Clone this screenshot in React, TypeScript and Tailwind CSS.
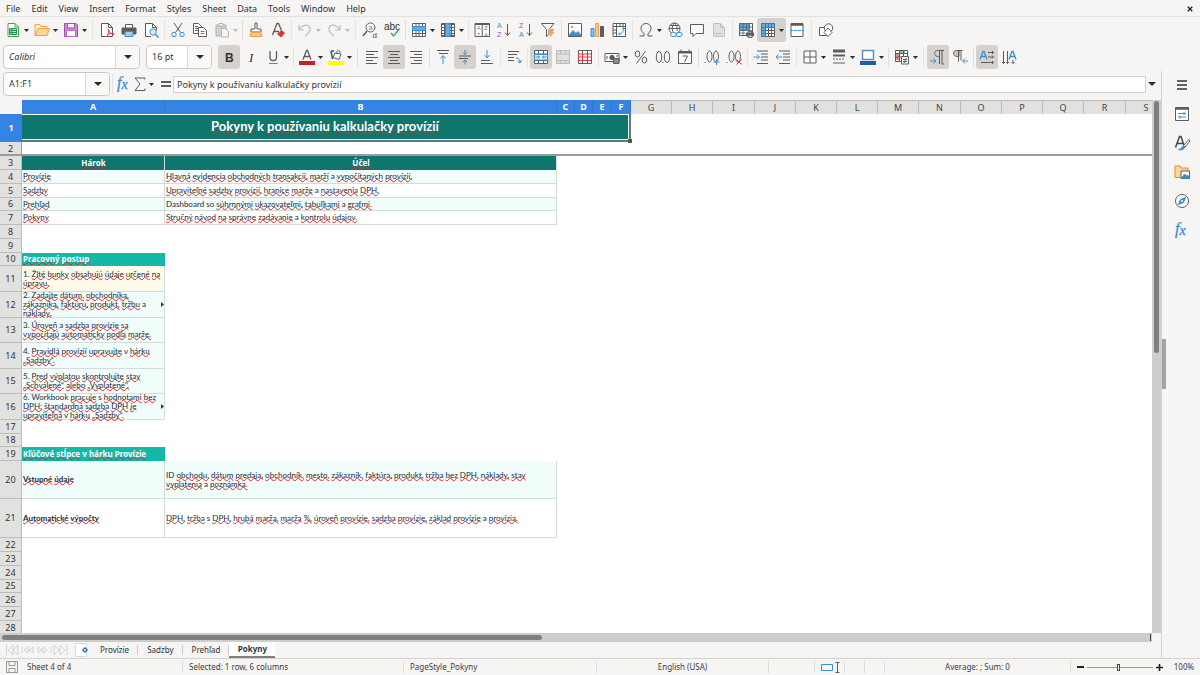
import type { ReactNode } from "react";

const blue = "#3a8fd0";
const red = "#e0343c";
const gray = "#5c5c5a";
const orange = "#eda14c";

const fn = <text x="1" y="12" fontSize="16" fontStyle="italic" fontFamily="Liberation Serif, serif" fill={blue} stroke={blue} strokeWidth=".3">f<tspan fontSize="14" dy="1">x</tspan></text>;
const sheetGrid = <path d="M1.5 2.5h13v11h-13zM1.5 5.5h13M1.5 8.5h13M1.5 11.5h13M4.5 2.5v11M8 2.5v11M11.5 2.5v11" />;

const icons: Record<string, ReactNode> = {
  new: (
    <g>
      <path d="M3 1.5h7l3.500 3.500v9.500h-10.500z" fill="#fff" stroke="#3fa35f" />
      <path d="M10 1.500v3.500h3.500" stroke="#3fa35f" />
      <path d="M4.500 6.500h7v6h-7zM4.500 8.500h7M4.500 10.500h7M7 6.500v6" fill="#b5e0c2" stroke="#2e9150" />
    </g>
  ),
  open: (
    <g stroke={orange}>
      <path d="M1 13.500v-11h5l1 2h6v3" fill="#fdf1df" />
      <path d="M1 13.500l3-7h11.500l-2.500 7z" fill="#fbd49a" />
    </g>
  ),
  save: (
    <g stroke="#a34fb0">
      <path d="M1.500 1.500h11.500l1.500 1.500v11.500h-13z" fill="#cd8bd8" />
      <path d="M4.500 1.500h7v4.500h-7z" fill="#f6f5f4" />
      <path d="M3.500 8.500h9v6h-9z" fill="#fff" stroke="#b76cc4" />
    </g>
  ),
  pdf: (
    <g>
      <path d="M2.500 1.500h7l4 4v9h-11zM9.500 1.500v4h4" fill="#fff" />
      <path d="M9 7c1 4 4 5 6.500 5.500M10 8c0 3-1 5-3 7M8 13c2-2 5-2 7-1" stroke={red} />
    </g>
  ),
  print: (
    <g>
      <path d="M4.500 6v-3.500h7v3.500" fill="#fff" />
      <path d="M1 6h14v6h-14z" fill="#5c5c5a" />
      <path d="M4 9.500h8v5h-8z" fill="#9fcdf0" stroke={blue} />
    </g>
  ),
  preview: (
    <g>
      <path d="M8 14.500h-5.500v-13h7l4 4v3M9.500 1.500v4h4" fill="#fff" />
      <circle cx="10" cy="10" r="3.200" fill="#d7ecfa" stroke={blue} />
      <path d="M12.500 12.500l3 3" stroke={blue} strokeWidth="1.500" />
    </g>
  ),
  cut: (
    <g>
      <path d="M4 1l6.500 9.500M12 1l-6.500 9.500" />
      <circle cx="4" cy="12.500" r="2.200" stroke={blue} />
      <circle cx="12" cy="12.500" r="2.200" stroke={blue} />
    </g>
  ),
  copy: (
    <g fill="#fff">
      <path d="M1.500 1.500h5l3 3v7h-8zM3 4.500h3M3 6.500h4M3 8.500h4" />
      <path d="M6.500 5.500h5l3 3v6h-8z" />
      <path d="M8.500 9.500h4M8.500 11.500h4" stroke={blue} />
    </g>
  ),
  paste: (
    <g stroke="#b5b3b0">
      <path d="M2 3h10v11h-10z" fill="#d2d0cd" />
      <path d="M5 1.500h4v3h-4z" fill="#eee" />
      <path d="M7.500 6.500h4l3 3v5.500h-7z" fill="#f6f5f4" />
    </g>
  ),
  clone: (
    <g>
      <path d="M7 1h2v6h4v3h-10v-3h4z" fill="#fff" />
      <path d="M3 10.500h10l1 4h-12z" fill="#fbc88a" stroke={orange} />
    </g>
  ),
  clear: (
    <g>
      <path d="M2.500 13l4.500-11.500h1.500l3 7M4 9.500h5" strokeWidth="1.300" />
      <path d="M7.500 12l4-3.500 3 2.500-3.500 4z" fill={red} stroke={red} />
    </g>
  ),
  undo: <path d="M2 3v5h5M2.500 7.500c3-5 9-6 10.500-1.500 1 3-1.500 5-5 8" stroke="#c2c0bd" strokeWidth="1.200" />,
  redo: <path d="M14 3v5h-5M13.500 7.500c-3-5-9-6-10.500-1.500-1 3 1.500 5 5 8" stroke="#c2c0bd" strokeWidth="1.200" />,
  find: (
    <g>
      <circle cx="8.500" cy="5.500" r="4.500" fill="#fff" />
      <path d="M5 9l-4 5" strokeWidth="1.500" />
      <text x="6.500" y="7.500" fontSize="7" fill={blue} stroke="none">a</text>
      <text x="10.500" y="15.500" fontSize="8" fill="#444" stroke="none">d</text>
    </g>
  ),
  spell: (
    <g>
      <text x="0" y="8" fontSize="10" fill="#333" stroke="none">abc</text>
      <path d="M7 11l2.500 3 5-6" stroke="#3fae5f" strokeWidth="1.400" />
    </g>
  ),
  row: (
    <g>
      <path d="M1.500 1.500h13v13h-13zM1.500 11.500h13M5 1.500v13M8 1.500v13M11.500 1.500v13" fill="#fff" />
      <path d="M1.500 4.500h13v4h-13z" fill="#5faee5" stroke={blue} />
    </g>
  ),
  column: (
    <g>
      <path d="M1.500 1.500h13v13h-13z" fill="#fff" />
      {sheetGrid}
      <path d="M5.500 1.500h4.500v13h-4.500z" fill="#5faee5" stroke={blue} />
    </g>
  ),
  sort: (
    <g>
      <path d="M1 1.500h14.500v13h-14.500z" fill="#fff" />
      <path d="M1 2h14.500" strokeWidth="2" />
      <path d="M8.200 2v12.500" />
      <g fontSize="6" stroke="none">
        <text x="2.500" y="8" fill={blue}>A</text>
        <text x="2.500" y="15" fill="#a34fb0">Z</text>
        <text x="10" y="8" fill="#a34fb0">Z</text>
        <text x="10" y="15" fill={blue}>A</text>
      </g>
    </g>
  ),
  asc: (
    <g>
      <text x="1" y="6" fontSize="7" fill={blue} stroke="none">A</text>
      <text x="1" y="15" fontSize="7" fill="#a34fb0" stroke="none">Z</text>
      <path d="M11.500 2v11M9 10.500l2.500 3 2.500-3" />
    </g>
  ),
  desc: (
    <g>
      <text x="1" y="6" fontSize="7" fill="#a34fb0" stroke="none">Z</text>
      <text x="1" y="15" fontSize="7" fill={blue} stroke="none">A</text>
      <path d="M11.500 2v11M9 10.500l2.500 3 2.500-3" />
    </g>
  ),
  filter: (
    <g>
      <path d="M1.500 1.500h12.500l-5 6v5l-2.500 2v-7z" fill="#fff" />
      <path d="M11 7l-2 4h2l-1 4 4-5h-2l2-3z" fill={orange} stroke={orange} strokeWidth=".6" />
    </g>
  ),
  image: (
    <g>
      <path d="M1.500 1.500h13v13h-13z" fill="#fff" />
      <path d="M2 13.500l4-5 3 3 2-2 3.500 4z" fill={blue} stroke={blue} />
      <circle cx="5" cy="5" r="1.300" fill={orange} stroke="none" />
    </g>
  ),
  chart: (
    <g>
      <path d="M2 6.500h3v8h-3z" fill="#8ac3ec" stroke={blue} />
      <path d="M6.500 1.500h3v13h-3z" fill="#fbc88a" stroke={orange} />
      <path d="M11.500 4.500h3v10h-3z" fill="#5c5c5a" />
    </g>
  ),
  pivot: (
    <g>
      <path d="M2 1.500h12.500v13h-12.500zM2 4.500h12.500M5.500 1.500v13M9 1.500v3M12 1.500v3M2 8h3.500M2 11h3.500" fill="#fff" />
      <path d="M11 7l1.500-1.500 1.500 1.500M12.500 6c0 4-1.500 6-5 6M9 10.500l-1.500 1.500 1.500 1.500" stroke={blue} />
    </g>
  ),
  omega: <path d="M1.500 14h4.500v-2.500c-5-3-3.500-10 2-10s7 7 2 10v2.500h4.500" />,
  link: (
    <g>
      <circle cx="7.500" cy="6.500" r="5.500" fill="#fff" />
      <path d="M2 6.500h11M3 3.500h9M7.500 1c-3 3-3 8 0 11M7.500 1c3 3 3 6 2.500 8" />
      <rect x="3.500" y="10.500" width="6" height="4" rx="2" fill="#fff" stroke={blue} />
      <rect x="9" y="10.500" width="6" height="4" rx="2" stroke={blue} />
    </g>
  ),
  comment: <path d="M1.500 2.500h13v9h-7.500l-3 3v-3h-2.500z" fill="#fff" />,
  headerFooter: (
    <g stroke="#c2c0bd">
      <path d="M2.500 1.500h7l4 4v9h-11z" fill="#e2e0de" />
      <path d="M9.500 1.500v4h4M4 11.500h7" />
    </g>
  ),
  printArea: (
    <g>
      <path d="M1.500 1.500h13v12h-13z" fill="#fff" />
      <path d="M2 2h9v6h-9z" fill="#5faee5" stroke={blue} />
      <path d="M1.500 5h13M1.500 8.500h13M1.500 11h6M5 1.500v12M8.500 1.500v7M11.500 1.500v7M14.500 1.500v7" strokeWidth=".8" />
      <path d="M8.500 11h7v3h-7z" fill="#5c5c5a" />
      <path d="M10 9.500h4v1.500h-4zM10 13h4v2.500h-4z" fill="#9fcdf0" strokeWidth=".8" />
    </g>
  ),
  freeze: (
    <g>
      <path d="M1.500 1.500h13v13h-13z" fill="#fff" />
      <path d="M1.500 5.500h13M1.500 8.500h13M1.500 11.500h13M5.500 1.500v13M8.500 1.500v13M11.500 1.500v13" />
      <path d="M1.500 1.500h13v4h-9v9h-4z" fill="#5faee5" stroke="#2a7fc4" />
      <path d="M5.500 1.500v4h-4M8.500 1.500v4M11.500 1.500v4M1.500 8.500h4M1.500 11.500h4" stroke="#2a7fc4" />
    </g>
  ),
  split: (
    <g>
      <path d="M2 1.500h12v13h-12z" fill="#fff" />
      <path d="M2 2.500h12" strokeWidth="2.500" />
      <path d="M1 8.500h14" stroke={blue} strokeDasharray="3 1" />
    </g>
  ),
  shapes: (
    <g>
      <path d="M1.500 5.500h7v8h-7z" fill="#fff" />
      <circle cx="10.500" cy="6" r="4.200" fill="#fff" />
      <path d="M10 6l4 4.500-4 4-4-4z" fill="#fff" />
    </g>
  ),
  bold: <text x="4" y="12.500" fontSize="12" fontWeight="bold" fill="#333" stroke="none">B</text>,
  italic: <text x="6" y="13" fontSize="13" fontStyle="italic" fontFamily="Liberation Serif, serif" fill="#333" stroke="none">I</text>,
  underline: (
    <g>
      <path d="M5 2v6.500c0 4 6.500 4 6.500 0v-6.500" strokeWidth="1.300" />
      <path d="M4 14.500h8.500" stroke={blue} />
    </g>
  ),
  fontColor: (
    <g>
      <path d="M4 10.500l3.500-9h1l3.500 9M5.300 7.500h5.400" strokeWidth="1.300" />
      <path d="M0 12h16v4h-16z" fill="#c9211e" stroke="none" />
    </g>
  ),
  highlight: (
    <g>
      <path d="M3 2l1.500 8M3 2h3" stroke="#2a5e8d" strokeWidth="1.500" />
      <path d="M7 4l6 1-2 5.500-6-2z" fill="#fff" />
      <path d="M9 5c-1-4 3-5 3-1" />
      <path d="M0 12h16v4h-16z" fill="#ffff00" stroke="none" />
    </g>
  ),
  left: <path d="M2 2.500h12M2 5.500h8M2 8.500h12M2 11.500h7M2 14.500h11" />,
  center: <path d="M2 2.500h12M4 5.500h8M2 8.500h12M4 11.500h8M2 14.500h12" />,
  right: <path d="M2 2.500h12M6 5.500h8M2 8.500h12M6 11.500h8M3 14.500h11" />,
  top: (
    <g>
      <path d="M2 1.500h12M4 4.500h9" />
      <path d="M8 15v-8M5.500 9.500l2.500-3 2.500 3" stroke={blue} />
    </g>
  ),
  middle: (
    <g>
      <path d="M2 7h12M2 9.500h9" />
      <path d="M8 1v4.500M6 3.500l2 2 2-2M8 15.500v-4.500M6 13l2-2 2 2" stroke={blue} />
    </g>
  ),
  bottom: (
    <g>
      <path d="M2 11.500h9M2 14.500h12" />
      <path d="M8 1v7.500M5.500 6l2.500 3 2.500-3" stroke={blue} />
    </g>
  ),
  wrap: (
    <g>
      <path d="M2 2.500h11M2 5.500h9M2 8.500h6M2 11.500h6" />
      <path d="M10 9c3 0 4 2 4 5M11.500 12l2.500 2 1.500-3" stroke={blue} />
    </g>
  ),
  mergeCenter: (
    <g>
      <path d="M1.500 1.500h13v13h-13zM1.500 5h13M1.500 11.500h13M5.500 1.500v3.500M10.500 1.500v3.500M5.500 11.500v3M10.500 11.500v3" fill="#fff" />
      <path d="M1.500 5.500h13v5.500h-13z" stroke={blue} fill="#e4f2fc" />
      <path d="M2.500 8h4M13.500 8h-4M5 6.500l1.500 1.500-1.500 1.500M11 6.500l-1.500 1.500 1.500 1.500" stroke={blue} />
    </g>
  ),
  merge: <path d="M1.500 1.500h13v13h-13zM1.500 5h13M1.500 11.500h13M5.500 1.500v3.500M10.500 1.500v3.500M5.500 11.500v3M10.500 11.500v3" stroke="#bdbbb8" fill="#e2e0de" />,
  unmerge: (
    <g>
      <path d="M1.500 1.500h13v13h-13zM5.500 1.500v13M10.500 1.500v13" fill="#fff" />
      <path d="M1.500 5h13v6.500h-13zM5.500 5v6.500M10.500 5v6.500M1.500 8h13" stroke={red} />
    </g>
  ),
  currency: (
    <g>
      <path d="M1 4.500h14v8h-14z" fill="#fff" />
      <circle cx="8" cy="8.500" r="2.200" fill="#5c5c5a" />
      <path d="M9.500 9.500h5.500v5h-5.500z" fill="#8c8c8a" />
      <path d="M3 7v3M13 6v2" />
    </g>
  ),
  percent: (
    <g>
      <ellipse cx="4.500" cy="5" rx="2.300" ry="3" />
      <ellipse cx="11.500" cy="11" rx="2.300" ry="3" />
      <path d="M12.500 2l-9 12.500" />
    </g>
  ),
  number: (
    <g>
      <ellipse cx="4" cy="8" rx="2.700" ry="5.500" />
      <ellipse cx="12" cy="8" rx="2.700" ry="5.500" />
      <path d="M7.500 13.500h1" />
    </g>
  ),
  date: (
    <g>
      <path d="M1.500 2.500h13v12h-13z" fill="#fff" />
      <path d="M1.500 3.500h13" strokeWidth="2" />
      <path d="M4 .500v3M12 .500v3M5.500 7h5l-3 6" />
    </g>
  ),
  addDecimal: (
    <g>
      <path d="M.500 13.500h1" />
      <ellipse cx="5.500" cy="7.500" rx="2.500" ry="5.500" />
      <ellipse cx="12" cy="7.500" rx="2.500" ry="5.500" />
      <path d="M12.500 10v6M9.500 13h6" stroke={blue} />
    </g>
  ),
  removeDecimal: (
    <g>
      <path d="M.500 13.500h1" />
      <ellipse cx="5.500" cy="7.500" rx="2.500" ry="5.500" />
      <ellipse cx="12" cy="7.500" rx="2.500" ry="5.500" />
      <path d="M10.500 10.500l5 5M15.500 10.500l-5 5" stroke={red} />
    </g>
  ),
  indent: (
    <g>
      <path d="M4 2h11M8 5h7M8 8h7M8 11h7M4 14.500h11" />
      <path d="M.500 8h5.500M4 5.500l2.500 2.500-2.500 2.500" stroke={blue} />
    </g>
  ),
  outdent: (
    <g>
      <path d="M4 2h11M8 5h7M8 8h7M8 11h7M4 14.500h11" />
      <path d="M1 8h6M3.500 5.500l-2.500 2.500 2.500 2.500" stroke={blue} />
    </g>
  ),
  borders: (
    <g>
      <path d="M2 2h12v12h-12zM8 2v12M2 8h12" fill="#fff" />
      <path d="M2 14.500h12" stroke={orange} />
    </g>
  ),
  lineStyle: (
    <g>
      <path d="M2 2h12" strokeWidth="3" />
      <path d="M2 6.500h12" strokeWidth="2" />
      <path d="M2 10h12" strokeDasharray="2 1" />
      <path d="M2 14h12" />
    </g>
  ),
  lineColor: (
    <g>
      <path d="M2.500 1.500h11v9h-11z" fill="#fff" stroke="#5c8fbc" strokeWidth="1.500" />
      <path d="M0 12h16v4h-16z" fill="#1c5fa8" stroke="none" />
    </g>
  ),
  conditional: (
    <g>
      <path d="M1.500 1.500h12v11h-12z" fill="#fff" />
      <path d="M5 2h6v3h-6z" fill="#7cc98f" stroke="none" />
      <path d="M2 5h4v6h-4z" fill="#ee8a86" stroke="none" />
      <path d="M1.500 4.500h12M1.500 8h12M5.500 1.500v11M9.500 1.500v11" />
      <path d="M7.500 7.500h7v7.500h-7z" fill="#fff" />
      <path d="M9 10.500h4M9 12.500h4M12.500 9l-2.500 5" />
    </g>
  ),
  ltr: (
    <g>
      <path d="M14 1.500h-6.500c-4 0-4 6 1 6h1M9.500 1.500v13.500M12 1.500v13.500h2" />
      <path d="M0 12h6M3.500 9.500l2.500 2.500-2.500 2.500" stroke={blue} />
    </g>
  ),
  rtl: (
    <g>
      <path d="M5.500 7.500c-5 0-5-6-1-6h2.500v6z" fill="#c9c7c4" />
      <path d="M10.500 1.500h-4M6.500 1.500v11M9 1.500v10" />
      <path d="M16 12h-5M13 9.500l-2.500 2.500 2.500 2.500" stroke={blue} />
    </g>
  ),
  textRows: (
    <g>
      <path d="M1 10.500l3-8h1l3 8M2 7.500h5" stroke={blue} strokeWidth="1.300" />
      <path d="M9 3.500h5.500M9 8h5.500M2 13.500h12.500M13 2l1.500 1.500-1.500 1.500M13 6.500l1.500 1.500-1.500 1.500M13 12l1.500 1.500-1.500 1.500" />
    </g>
  ),
  textColumns: (
    <g>
      <path d="M8 10.500l3-8h1l3 8M9 7.500h5" stroke={blue} strokeWidth="1.300" />
      <path d="M2.500 2v12.500M6.500 2v12.500M12 11v3.500M1 13l1.500 1.500 1.500-1.500M5 13l1.500 1.500 1.500-1.500M10.500 13l1.500 1.500 1.500-1.500" />
    </g>
  ),
  fn,
  sigma: <path d="M12 3.500v-1.500h-10l5 6-5 6.500h10v-2" />,
  equals: <path d="M3 6h10M3 10h10" strokeWidth="1.800" />,
  menu: <path d="M3 4h10M3 8h10M3 12h10" stroke="#333" strokeWidth="1.500" />,
  properties: (
    <g>
      <path d="M1.500 1.500h13v13h-13z" fill="#fff" />
      <path d="M1.500 2.500h13" strokeWidth="2.500" />
      <path d="M4 7.500h8M4 11h8M10 6v3M6 9.500v3" stroke={blue} />
    </g>
  ),
  styles: (
    <g>
      <path d="M1.500 12.500l4-11h1.500l3 9M3 8.500h5.500" strokeWidth="1.500" stroke="#444" />
      <path d="M15 4.500l-5.500 6 1.500 1.500 5-6z" fill="#fff" />
      <path d="M9 11c-1 2-2 3-4.500 3.500 3 1 6 0 6-2.500z" fill={blue} stroke={blue} />
    </g>
  ),
  gallery: (
    <g>
      <path d="M1 13.500v-11.500h5l1 2h7v9.500z" fill="#fbd49a" stroke="#e58a2e" />
      <path d="M7 7h8.500v7.500h-8.500z" fill="#fff" />
      <path d="M7.500 14l3-4 2 2 1-1 2 3z" fill={blue} stroke={blue} />
    </g>
  ),
  navigator: (
    <g>
      <circle cx="8" cy="8" r="6.500" fill="#fff" />
      <path d="M11.500 4.500l-2 5-5 2 2-5z" fill={blue} stroke={blue} />
      <circle cx="8" cy="8" r="1" fill="#fff" stroke="none" />
    </g>
  ),
  statusSave: <path d="M2.500 2.500h11v11h-11zM5 2.500v4h6v-4M5 13.500v-4h6v4" stroke="#9a9a98" />,
  addSheet: (
    <g>
      <path d="M1.500 1.500h11v13h-11z" fill="#fff" stroke="#dddbd8" />
      <path d="M11 5.500v5M8.500 8h5" stroke="#2a65b0" strokeWidth="2.500" />
      <circle cx="11" cy="8" r="1" fill="#fff" stroke="none" />
    </g>
  ),
};

function Icon({ name }: { name: string }) {
  return (
    <svg viewBox="0 0 16 16" className="size-4 shrink-0 overflow-visible" fill="none" stroke={gray} fontFamily="Liberation Sans, sans-serif" aria-hidden="true">
      {icons[name]}
    </svg>
  );
}

function Caret({ dim, big }: { dim?: boolean; big?: boolean }) {
  return (
    <svg viewBox="0 0 8 4" className={big ? "h-1 w-2" : "h-[3px] w-[5px]"} preserveAspectRatio="none" aria-hidden="true">
      <path d="M0 0h8l-4 4z" fill={dim ? "#bdbbb8" : "#2b2b2b"} />
    </svg>
  );
}

type Tool = { icon: string; menu?: boolean; active?: boolean; dim?: boolean } | "|" | "||";

const standardTools: Tool[] = [
  { icon: "new", menu: true }, { icon: "open", menu: true }, { icon: "save", menu: true }, "||",
  { icon: "pdf" }, { icon: "print" }, { icon: "preview" }, "|",
  { icon: "cut" }, { icon: "copy" }, { icon: "paste", menu: true, dim: true }, "|",
  { icon: "clone" }, { icon: "clear" }, "|",
  { icon: "undo", menu: true, dim: true }, { icon: "redo", menu: true, dim: true }, "||",
  { icon: "find" }, { icon: "spell" }, "|",
  { icon: "row", menu: true }, { icon: "column", menu: true }, "|",
  { icon: "sort" }, { icon: "asc" }, { icon: "desc" }, { icon: "filter" }, "|",
  { icon: "image" }, { icon: "chart" }, { icon: "pivot" }, "|",
  { icon: "omega", menu: true }, { icon: "link" }, { icon: "comment" }, { icon: "headerFooter", dim: true }, "|",
  { icon: "printArea" }, { icon: "freeze", menu: true, active: true }, { icon: "split" }, "||",
  { icon: "shapes" },
];

const formatTools: Tool[] = [
  { icon: "bold", active: true }, { icon: "italic" }, { icon: "underline", menu: true }, "|",
  { icon: "fontColor", menu: true }, { icon: "highlight", menu: true }, "||",
  { icon: "left" }, { icon: "center", active: true }, { icon: "right" }, "|",
  { icon: "top" }, { icon: "middle", active: true }, { icon: "bottom" }, "|",
  { icon: "wrap" }, "|",
  { icon: "mergeCenter", active: true }, { icon: "merge", dim: true }, { icon: "unmerge" }, "|",
  { icon: "currency", menu: true }, { icon: "percent" }, { icon: "number" }, { icon: "date" }, "|",
  { icon: "addDecimal" }, { icon: "removeDecimal" }, "|",
  { icon: "indent" }, { icon: "outdent" }, "|",
  { icon: "borders", menu: true }, { icon: "lineStyle", menu: true }, { icon: "lineColor", menu: true }, "|",
  { icon: "conditional", menu: true }, "||",
  { icon: "ltr", active: true }, { icon: "rtl" }, "|",
  { icon: "textRows", active: true }, { icon: "textColumns" },
];

function Tools({ items }: { items: Tool[] }) {
  return (
    <>
      {items.map((t, i) =>
        typeof t === "string" ? (
          <span key={i} className={t === "||" ? "flex h-5 w-[7px] shrink-0 justify-center" : "flex h-5 w-[5px] shrink-0 justify-center"}>
            <span className="w-px bg-[#e4e2df]" />
          </span>
        ) : (
          <button
            key={i}
            aria-label={t.icon}
            disabled={t.dim}
            className={`flex h-6 shrink-0 items-center rounded-[3px] ${t.active ? "bg-[#d5d1cd]" : ""} ${t.menu ? "w-[29px]" : "w-[22px]"}`}
          >
            <span className="flex w-[22px] justify-center">
              <Icon name={t.icon} />
            </span>
            {t.menu && <Caret dim={t.dim} />}
          </button>
        )
      )}
    </>
  );
}

function Combo({ label, value, size, italic }: { label: string; value: string; size: string; italic?: boolean }) {
  return (
    <div className={`flex h-6 shrink-0 overflow-hidden rounded-[4px] border border-[#cdc7c2] bg-white ${size}`}>
      <input aria-label={label} defaultValue={value} className={`min-w-0 flex-1 px-[5px] text-[9px] text-[#2e3436] outline-none ${italic ? "italic" : ""}`} />
      <button aria-label={`${label} list`} className="flex w-6 items-center justify-center border-l border-[#dcd8d4] bg-[#f9f8f7]">
        <Caret big />
      </button>
    </div>
  );
}

const columns = [
  { name: "A", width: "w-[143px]" },
  { name: "B", width: "w-[392px]" },
  { name: "C", width: "w-[18px]" },
  { name: "D", width: "w-[18px]" },
  { name: "E", width: "w-[19px]" },
  { name: "F", width: "w-[19px]" },
  { name: "G", width: "w-[41px]" },
  { name: "H", width: "w-[41px]" },
  { name: "I", width: "w-[42px]" },
  { name: "J", width: "w-[41px]" },
  { name: "K", width: "w-[41px]" },
  { name: "L", width: "w-[41px]" },
  { name: "M", width: "w-[41px]" },
  { name: "N", width: "w-[42px]" },
  { name: "O", width: "w-[41px]" },
  { name: "P", width: "w-[41px]" },
  { name: "Q", width: "w-[41px]" },
  { name: "R", width: "w-[42px]" },
  { name: "S", width: "w-[41px]" },
];

type Row = { h: string; a?: string; b?: string; kind?: "head" | "section" | "step" | "info"; bg?: string; more?: boolean };

const mint = "bg-[#f0fdfa]";

const rows: Row[] = [
  { h: "h-[14px]", a: "Hárok", b: "Účel", kind: "head" },
  { h: "h-[14px]", a: "Provízie", b: "Hlavná evidencia obchodných transakcií, marží a vypočítaných provízií.", bg: mint },
  { h: "h-[14px]", a: "Sadzby", b: "Upraviteľné sadzby provízií, hranice marže a nastavenia DPH.", bg: "bg-white" },
  { h: "h-[13px]", a: "Prehľad", b: "Dashboard so súhrnnými ukazovateľmi, tabuľkami a grafmi.", bg: mint },
  { h: "h-[14px]", a: "Pokyny", b: "Stručný návod na správne zadávanie a kontrolu údajov.", bg: "bg-white" },
  { h: "h-[14px]" },
  { h: "h-[14px]" },
  { h: "h-[13px]", a: "Pracovný postup", kind: "section" },
  { h: "h-[26px]", a: "1. Žlté bunky obsahujú údaje určené na\núpravu.", kind: "step", bg: "bg-[#fffbeb]" },
  { h: "h-[26px]", a: "2. Zadajte dátum, obchodníka,\nzákazníka, faktúru, produkt, tržbu a\nnáklady.", kind: "step", bg: mint, more: true },
  { h: "h-[25px]", a: "3. Úroveň a sadzba provízie sa\nvypočítajú automaticky podľa marže.", kind: "step", bg: mint },
  { h: "h-[26px]", a: "4. Pravidlá provízií upravujte v hárku\n„Sadzby“.", kind: "step", bg: mint },
  { h: "h-[25px]", a: "5. Pred výplatou skontrolujte stav\n„Schválené“ alebo „Vyplatené“.", kind: "step", bg: mint },
  { h: "h-[26px]", a: "6. Workbook pracuje s hodnotami bez\nDPH; štandardná sadzba DPH je\nupraviteľná v hárku „Sadzby“.", kind: "step", bg: mint, more: true },
  { h: "h-[14px]" },
  { h: "h-[13px]" },
  { h: "h-[14px]", a: "Kľúčové stĺpce v hárku Provízie", kind: "section" },
  { h: "h-[38px]", a: "Vstupné údaje", b: "ID obchodu, dátum predaja, obchodník, mesto, zákazník, faktúra, produkt, tržba bez DPH, náklady, stav\nvyplatenia a poznámka.", kind: "info", bg: mint },
  { h: "h-[39px]", a: "Automatické výpočty", b: "DPH, tržba s DPH, hrubá marža, marža %, úroveň provízie, sadzba provízie, základ provízie a provízia.", kind: "info", bg: "bg-white" },
  { h: "h-[14px]" },
  { h: "h-[14px]" },
  { h: "h-[14px]" },
  { h: "h-[13px]" },
  { h: "h-[14px]" },
  { h: "h-[14px]" },
  { h: "h-[14px]" },
];

// words the spell checker accepts
const known = /^([akvs%]|so|ID|Dashboard|Workbook|\d\.)$/;

function Spelled({ text }: { text: string }) {
  return (
    <>
      {text.split(/(\s+)/).map((w, i) =>
        !w.trim() || known.test(w) ? (
          w
        ) : (
          <span key={i} className="underline decoration-[#dc2626] decoration-wavy decoration-1 underline-offset-[-1px] [text-decoration-skip-ink:none]">
            {w}
          </span>
        )
      )}
    </>
  );
}

function Cell({ row, text, wide }: { row: Row; text?: string; wide?: boolean }) {
  let look = "border-b border-r border-[#d3dedc] font-['Lato',sans-serif] text-[#1f2937]";
  if (row.kind === "head") look = "justify-center border-r border-[#d3dedc] bg-[#0f766e] pb-0.5 font-bold text-white";
  if (row.kind === "section") look = "bg-[#14b8a6] pb-0.5 font-bold text-white";
  if (row.kind === "info" && !wide) look += " font-bold";
  if (text === undefined) return <td className="p-0" />;
  return (
    <td className="p-0">
      <div className={`relative flex items-center whitespace-pre pl-px text-[8px] leading-[9px] ${row.h} ${look} ${row.bg ?? ""}`}>
        <span>
          <Spelled text={text} />
        </span>
        {row.more && (
          <svg viewBox="0 0 3 5" className="absolute right-0 h-[5px] w-[3px]" aria-hidden="true">
            <path d="M0 0l3 2.500-3 2.500z" fill="#7a1c1c" />
          </svg>
        )}
      </div>
    </td>
  );
}

function Sheet() {
  return (
    <div className="min-h-0 min-w-0 flex-1 overflow-hidden bg-white">
      <table className="w-[1167px] table-fixed border-separate border-spacing-0">
        <thead>
          <tr>
            <th className="w-[22px] bg-[#f6f5f4] p-0" />
            {columns.map((c, i) => (
              <th key={c.name} scope="col" className={`${c.width} p-0`}>
                <div className={`h-[14px] border-r text-[9px] leading-[14px] ${i < 6 ? "border-[#2f76cd] bg-[#3584e4] font-bold text-white" : "border-[#bcbcba] border-t bg-[#e1e1df] font-normal leading-[12px] text-[#444]"}`}>
                  {c.name}
                </div>
              </th>
            ))}
          </tr>
        </thead>
        <tbody>
          <tr>
            <th scope="row" className="bg-[#3584e4] p-0 text-[9px] leading-[14px] text-white">1</th>
            <td colSpan={6} className="p-0">
              <div className="relative h-7 border-b-2 border-r-2 border-[#5b7d79] bg-white pb-px pr-px pt-px">
                <div className="flex h-6 items-center justify-center bg-[#0f766e] font-['Lato',sans-serif] text-[13px] font-bold text-white">
                  <span><Spelled text="Pokyny k používaniu kalkulačky provízií" /></span>
                </div>
                <span className="absolute -bottom-[3px] -right-[3px] size-1 bg-[#555]" />
              </div>
            </td>
            <td colSpan={13} />
          </tr>
          <tr>
            <th scope="row" className="border-b-2 border-r border-[#9a9c9b] bg-[#e1e1df] p-0 pt-0.5 text-[9px] font-normal leading-[10px] text-[#333]">2</th>
            <td colSpan={19} className="border-b-2 border-[#9a9c9b] p-0" />
          </tr>
          {rows.map((r, i) => (
            <tr key={i}>
              <th scope="row" className="p-0">
                <div className={`flex items-center justify-center border-b border-r border-[#bcbcba] bg-[#e1e1df] text-[9px] font-normal leading-[12px] text-[#333] ${r.h}`}>
                  {i + 3}
                </div>
              </th>
              <Cell row={r} text={r.a} />
              <Cell row={r} text={r.b} wide />
              <td colSpan={17} />
            </tr>
          ))}
        </tbody>
      </table>
    </div>
  );
}

function StatusDivider() {
  return <span className="h-3 w-px shrink-0 bg-[#dedcd9]" />;
}

const menus = ["File", "Edit", "View", "Insert", "Format", "Styles", "Sheet", "Data", "Tools", "Window", "Help"];
const sidebar = ["menu", "properties", "styles", "gallery", "navigator", "fn"];

export default function App() {
  return (
    <div className="flex h-screen flex-col overflow-hidden bg-[#f6f5f4] font-['Noto_Sans',sans-serif] text-[#2e3436]">
      <nav className="flex h-[17px] shrink-0 items-center border-b border-[#e4e2df] pl-1.5 pr-[7px] pt-px text-[9px]">
        <div className="flex flex-1 gap-[11px]">
          {menus.map((m) => (
            <button key={m}>{m}</button>
          ))}
        </div>
        <button aria-label="Close document">
          <svg viewBox="0 0 8 8" className="size-1.5" stroke="#222" strokeWidth="1.800" aria-hidden="true">
            <path d="M1 1l6 6M7 1l-6 6" />
          </svg>
        </button>
      </nav>

      <div className="flex h-[26px] shrink-0 items-center pl-0.5">
        <Tools items={standardTools} />
      </div>
      <div className="flex h-[28px] shrink-0 items-center pl-[3px]">
        <Combo label="Font name" value="Calibri" size="w-[137px]" italic />
        <span className="w-1.5 shrink-0" />
        <Combo label="Font size" value="16 pt" size="w-[66px]" />
        <span className="w-1.5 shrink-0" />
        <Tools items={formatTools} />
      </div>

      <div className="flex min-h-0 flex-1">
        <main className="flex min-w-0 flex-1 flex-col">
          <div className="flex h-[29px] shrink-0 items-center pb-[3px] pl-[3px]">
            <Combo label="Name box" value="A1:F1" size="w-[107px]" />
            <span className="mx-0.5 h-5 w-px bg-[#e4e2df]" />
            <button aria-label="Function wizard" className="flex w-[18px] justify-center"><Icon name="fn" /></button>
            <button aria-label="Select function" className="flex w-[26px] items-center"><Icon name="sigma" /><Caret /></button>
            <button aria-label="Formula" className="flex w-[14px] justify-center"><Icon name="equals" /></button>
            <input aria-label="Formula input" defaultValue="Pokyny k používaniu kalkulačky provízií" className="h-[17px] min-w-0 flex-1 border border-[#d5d1cd] bg-white px-[3px] text-[9px] outline-none" />
            <button aria-label="Expand formula bar" className="flex w-[15px] items-center justify-center pr-1"><Caret big /></button>
          </div>

          <div className="flex min-h-0 flex-1">
            <Sheet />
            <div className="w-[9px] shrink-0 bg-[#cdcdcc] px-0.5 pt-px">
              <div className="h-[252px] rounded-full bg-[#7e807e]" />
            </div>
          </div>
          <div className="mr-[9px] flex h-[9px] shrink-0 items-center justify-between bg-[#cdcdcc] pl-0.5">
            <div className="h-[5px] w-[540px] rounded-full bg-[#7e807e]" />
            <div className="mr-px h-[7px] w-px bg-[#444]" />
          </div>

          <div className="flex h-[17px] shrink-0 items-stretch border-b border-[#d5d1cd] text-[8px]">
            <svg viewBox="0 0 62 12" className="ml-1.5 h-3 w-[62px] self-center" fill="none" stroke="#d3d1ce" aria-hidden="true">
              <path d="M.500 1v10M7 1l-5 5 5 5zM12 1l-5 5 5 5zM16 3v6M22 3l-4 3 4 3zM27 3l-4 3 4 3zM32 3l4 3-4 3zM37 3l4 3-4 3zM45 3v6M48 1l5 5-5 5zM54 1l5 5-5 5zM61 1v10" />
            </svg>
            <button aria-label="Add sheet" className="ml-1.5 flex w-4 items-center"><Icon name="addSheet" /></button>
            <div role="tablist" className="ml-px flex">
              {["Provízie", "Sadzby", "Prehľad"].map((t) => (
                <button key={t} role="tab" aria-selected="false" className="flex items-center">
                  <span className="pl-[9px] pr-2">{t}</span>
                  <span className="h-2.5 w-px bg-[#cdcbc8]" />
                </button>
              ))}
              <button role="tab" aria-selected="true" className="w-[46px] border-b-2 border-[#7e807e] bg-white font-bold">
                Pokyny
              </button>
            </div>
          </div>
        </main>

        <aside className="flex w-[39px] shrink-0 border-b border-l border-[#d5d1cd]">
          <span className="mt-[268px] h-[50px] w-1 bg-[#a3a3a1]" />
          <div className="flex flex-1 flex-col items-center gap-[13px] pr-[3px] pt-1.5">
            {sidebar.map((s) => (
              <button key={s} aria-label={s}><Icon name={s} /></button>
            ))}
          </div>
        </aside>
      </div>

      <footer className="flex h-4 shrink-0 items-center text-[8px] text-[#3d3d3d]">
        <span className="flex w-[27px] shrink-0 pl-1"><Icon name="statusSave" /></span>
        <span className="w-[155px]">Sheet 4 of 4</span>
        <StatusDivider />
        <span className="w-[220px] pl-1.5">Selected: 1 row, 6 columns</span>
        <StatusDivider />
        <span className="w-[192px] pl-1.5">PageStyle_Pokyny</span>
        <StatusDivider />
        <span className="w-[171px] text-center">English (USA)</span>
        <StatusDivider />
        <span className="w-[45px]" />
        <StatusDivider />
        <svg viewBox="0 0 29 14" className="h-3.5 w-[29px]" fill="none" aria-hidden="true">
          <path d="M6.500 4.500h11v6h-11z" stroke={blue} />
          <path d="M20.500 2.500h4M20.500 12.500h4M22.500 2.500v10" stroke={gray} />
        </svg>
        <StatusDivider />
        <span className="w-[19px]" />
        <StatusDivider />
        <span className="w-[19px]" />
        <StatusDivider />
        <span className="flex-1 text-center">Average: ; Sum: 0</span>
        <StatusDivider />
        <button aria-label="Zoom out" className="ml-1.5 h-0.5 w-[7px] bg-[#222]" />
        <input
          type="range"
          aria-label="Zoom"
          defaultValue={48}
          className="mx-[3px] h-2 w-[66px] appearance-none bg-[linear-gradient(#9a9996,#9a9996)] bg-[length:100%_1px] bg-center bg-no-repeat [&::-webkit-slider-thumb]:h-[7px] [&::-webkit-slider-thumb]:w-[3px] [&::-webkit-slider-thumb]:appearance-none [&::-webkit-slider-thumb]:border [&::-webkit-slider-thumb]:border-[#444] [&::-webkit-slider-thumb]:bg-white"
        />
        <button aria-label="Zoom in" className="mr-[5px]">
          <svg viewBox="0 0 8 8" className="size-[7px]" stroke="#222" strokeWidth="1.800" aria-hidden="true">
            <path d="M4 0v8M0 4h8" />
          </svg>
        </button>
        <span className="w-[32px] text-center">100%</span>
      </footer>
    </div>
  );
}
